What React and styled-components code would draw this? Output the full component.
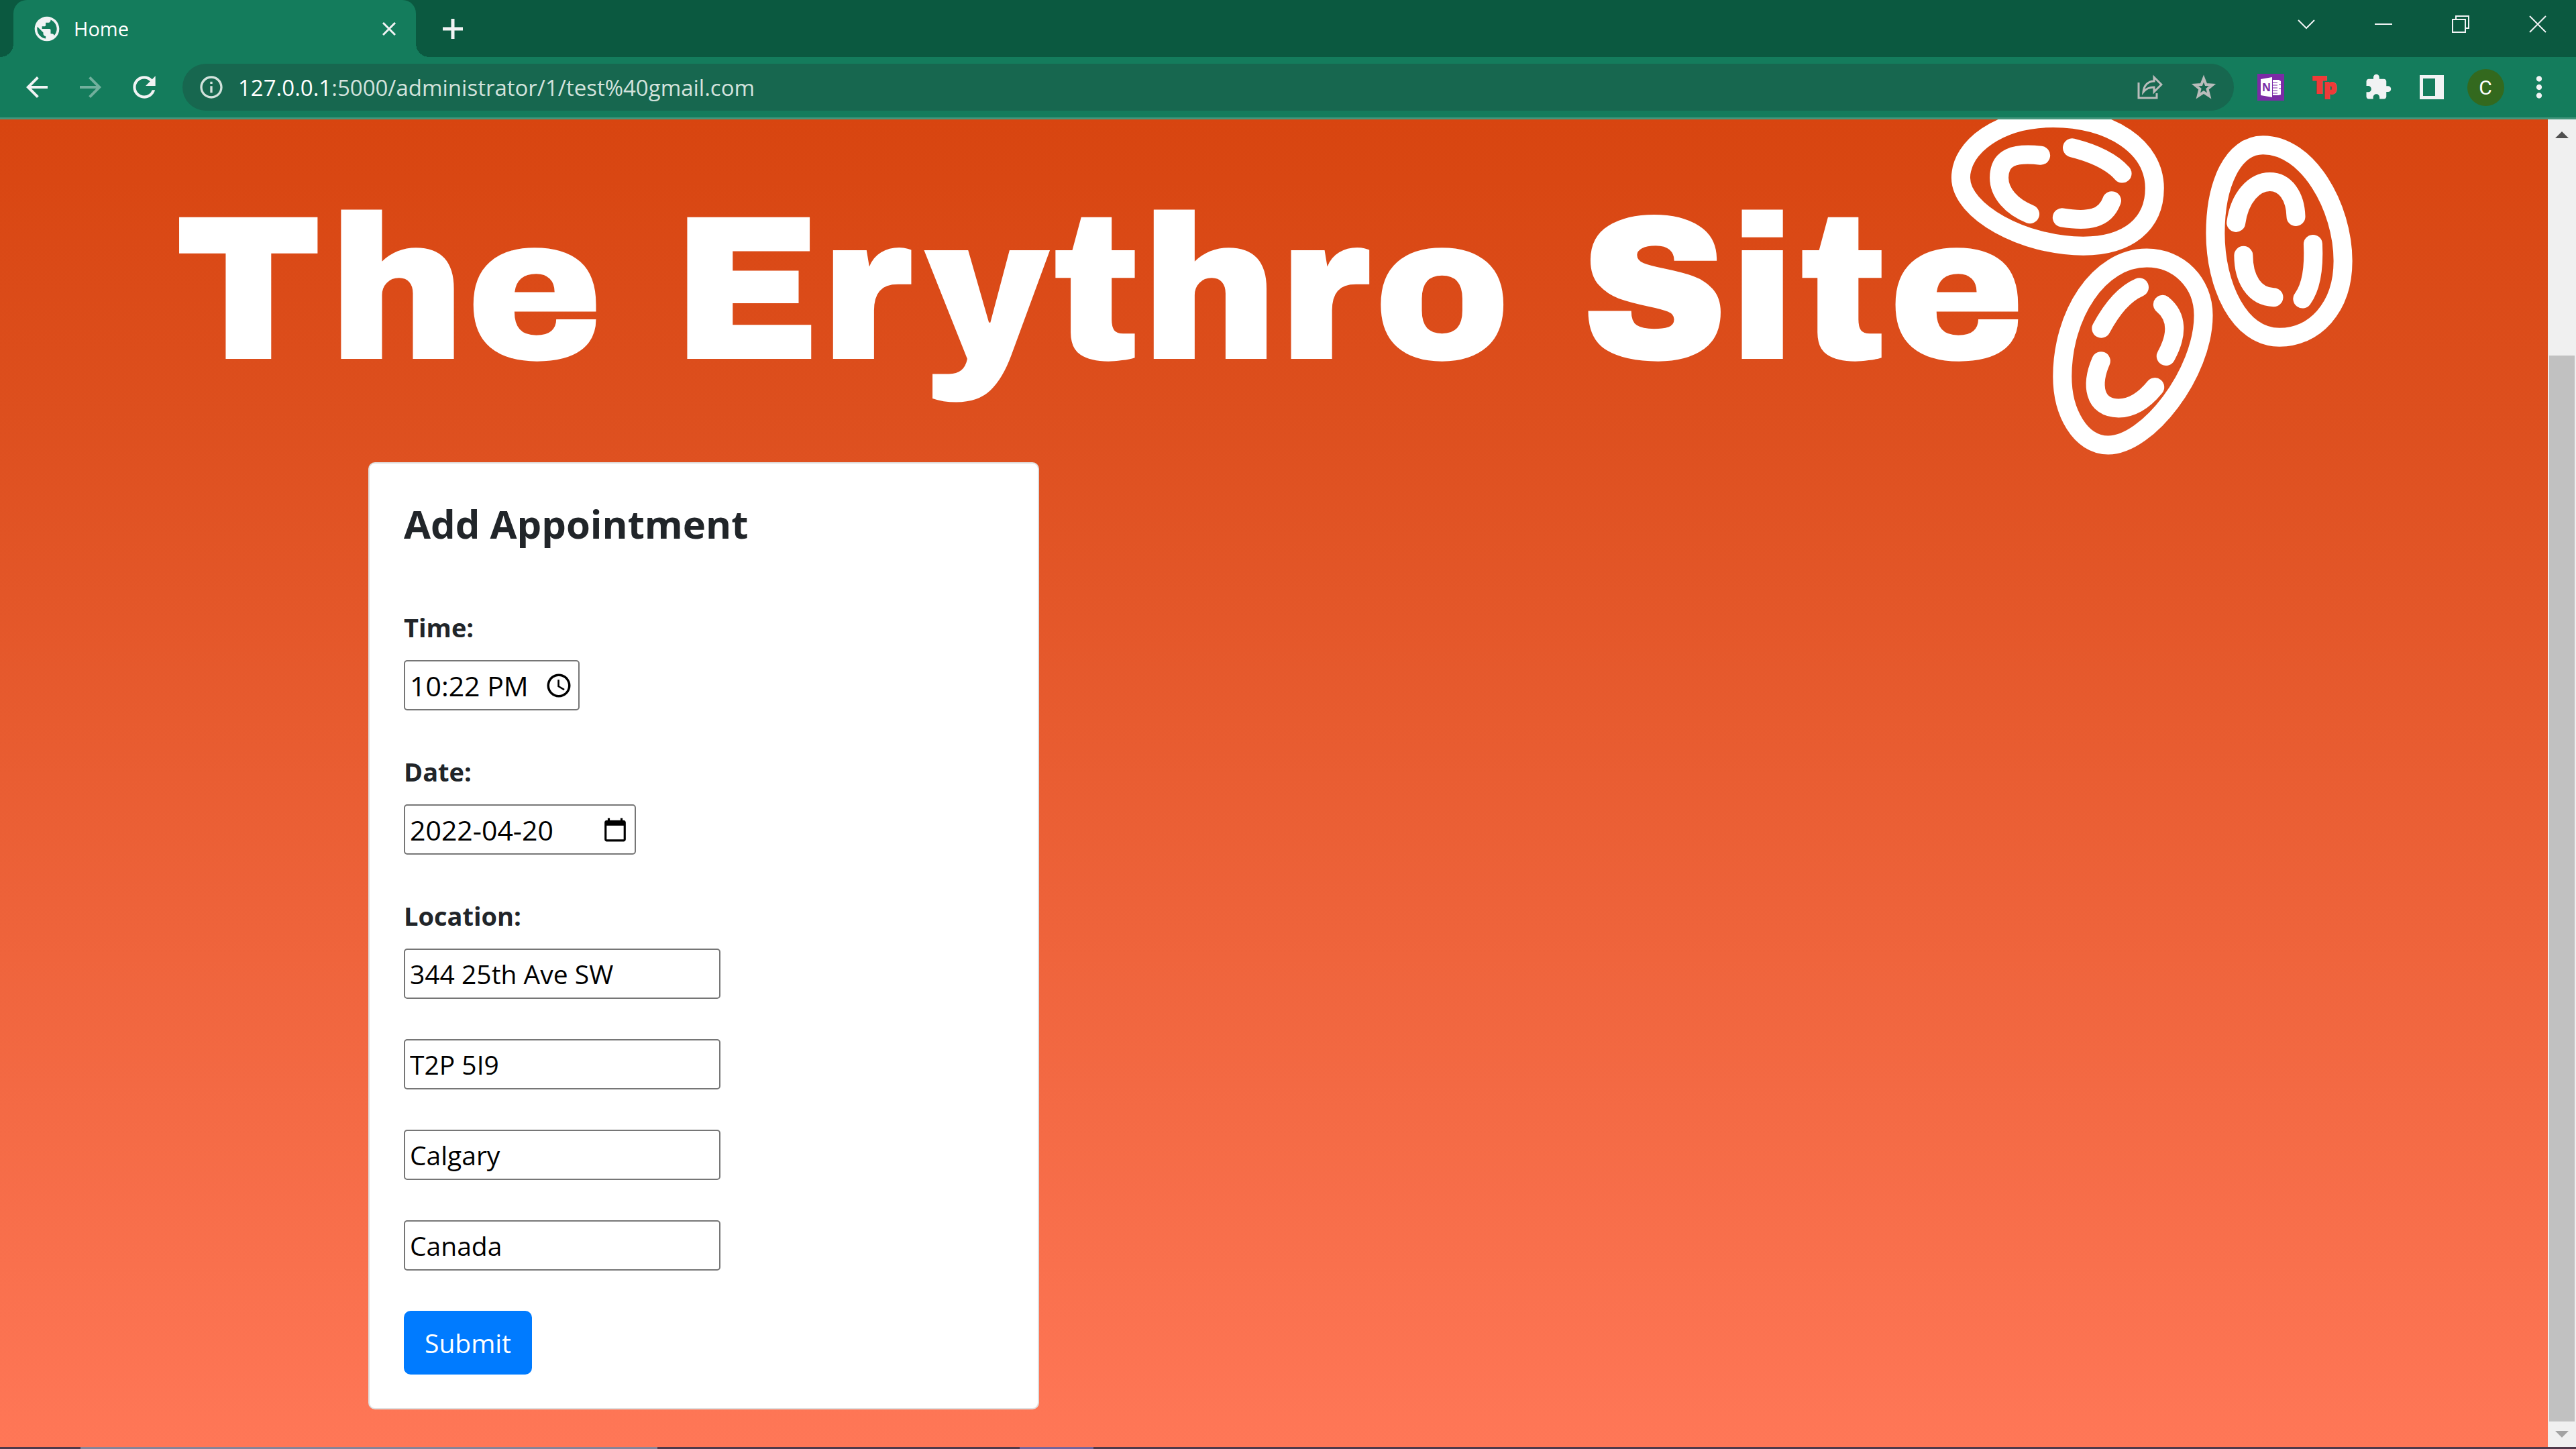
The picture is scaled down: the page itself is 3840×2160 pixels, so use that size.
import React from 'react';
import styled, { createGlobalStyle } from 'styled-components';
import {
  MdPublic, MdArrowBack, MdArrowForward, MdRefresh, MdInfoOutline,
  MdExtension, MdMoreVert, MdAccessTime, MdCalendarToday,
} from 'react-icons/md';

const ui = '"Segoe UI", "Open Sans", "Noto Sans", sans-serif';

const GlobalStyle = createGlobalStyle`
  *, *::before, *::after { box-sizing: border-box; }
  body { margin: 0; font-family: ${ui}; }
  button, input { font: inherit; color: inherit; }
  svg { display: block; }
`;

const Window = styled.div`
  display: flex;
  flex-direction: column;
  min-height: 100vh;
`;

const IconButton = styled.button`
  display: flex;
  flex: none;
  align-items: center;
  justify-content: center;
  width: ${(p) => p.$width || 80}px;
  height: ${(p) => p.$height || 70}px;
  padding: 0;
  border: 0;
  background: none;
  color: ${(p) => p.$color || '#f1f3f4'};
`;

const TabStrip = styled.div`
  display: flex;
  height: 85px;
  padding-left: 20px;
  background: #0b5940;
`;

const Tab = styled.div`
  position: relative;
  display: flex;
  align-items: center;
  width: 600px;
  padding: 0 20px 0 28px;
  border-radius: 20px 20px 0 0;
  background: #147c5c;
  color: #fff;
  font-size: 29px;

  &::before, &::after {
    content: '';
    position: absolute;
    bottom: 0;
    width: 20px;
    height: 20px;
  }
  &::before {
    right: 100%;
    background: radial-gradient(circle at 0 0, transparent 20px, #147c5c 20px);
  }
  &::after {
    left: 100%;
    background: radial-gradient(circle at 100% 0, transparent 20px, #147c5c 20px);
  }
`;

const TabTitle = styled.span`
  flex: 1;
  margin-left: 18px;
`;

const WindowControls = styled.div`
  display: flex;
  margin-left: auto;
`;

const Toolbar = styled.div`
  display: flex;
  align-items: center;
  height: 93px;
  padding: 0 15px;
  border-bottom: 3px solid #43967c;
  background: #147c5c;
`;

const AddressBar = styled.div`
  display: flex;
  flex: 1;
  align-items: center;
  height: 70px;
  margin: 0 15px 0 17px;
  padding: 0 5px 0 23px;
  border-radius: 35px;
  background: #17674f;
  color: #d2e2dc;
  font-size: 33px;
`;

const Address = styled.span`
  flex: 1;
  margin-left: 20px;
  white-space: nowrap;
`;

const Host = styled.span`
  color: #fff;
`;

const Avatar = styled.span`
  width: 55px;
  height: 55px;
  border-radius: 50%;
  background: #33691e;
  color: #fff;
  font: 30px/55px Roboto, sans-serif;
  text-align: center;
`;

const Viewport = styled.div`
  display: flex;
  flex: 1;
`;

const Page = styled.main`
  flex: 1;
  min-width: 0;
  padding-bottom: 56px;
  overflow: hidden;
  background: linear-gradient(#d84510, #dd4f1e 22%, #ff7757);
`;

const SiteHeader = styled.header`
  display: flex;
  height: 511px;
  padding: 0 238px 0 260px;
`;

const SiteTitle = styled.h1`
  flex: 1;
  min-width: 0;
  margin: 0;
  padding-top: 74px;
  color: #fff;
  font: 400 307px/360px "Archivo Black", "DejaVu Sans", sans-serif;
  white-space: nowrap;
`;

const Card = styled.form`
  display: flex;
  flex-direction: column;
  align-items: flex-start;
  gap: 60px;
  width: 1000px;
  margin-left: 549px;
  padding: 52px 51px 50px;
  border: 2px solid #dfdfdf;
  border-radius: 10px;
  background: #fff;
  color: #212529;
  font-size: 39px;
  line-height: 60px;
`;

const CardTitle = styled.h2`
  margin: 0 0 26px;
  font-size: 58px;
  font-weight: 700;
  line-height: 75px;
`;

const Field = styled.div`
  display: flex;
  flex-direction: column;
  gap: 18px;
`;

const Label = styled.label`
  font-size: 38px;
  font-weight: 700;
  line-height: 62px;
`;

const InputBox = styled.div`
  display: flex;
  align-items: center;
  width: ${(p) => p.$width}px;
  height: 75px;
  padding: 0 8px 0 0;
  border: 2px solid #767676;
  border-radius: 5px;
  background: #fff;
  color: #000;
  font-size: ${(p) => (p.$picker ? 41 : 39)}px;
`;

const Input = styled.input`
  flex: 1;
  min-width: 0;
  height: 71px;
  padding: 0 0 0 7px;
  border: 0;
  outline: 0;
  background: none;
`;

const Submit = styled.button`
  height: 95px;
  padding: 0 31px;
  border: 0;
  border-radius: 10px;
  background: #007bff;
  color: #fff;
`;

const Scrollbar = styled.div`
  display: flex;
  flex-direction: column;
  align-items: center;
  width: 42px;
  padding-top: 4px;
  background: #f0f0f0;
`;

const Thumb = styled.div`
  flex: 1;
  width: 38px;
  margin-top: 310px;
  background: #c1c1c1;
`;

const TaskbarEdge = styled.div`
  display: flex;
  height: 3px;
  background: #50394a;
`;

const TaskbarItem = styled.span`
  width: ${(p) => p.$width}px;
  margin-left: ${(p) => p.$before}px;
  background: ${(p) => p.$color};
`;

function Cells() {
  return (
    <svg width="700" height="500" viewBox="0 52 1568 1452" preserveAspectRatio="none" fill="none" aria-hidden="true">
      <g stroke="#fff" strokeWidth="28" strokeLinecap="round">
        {[
          'M141 305C141 170 270 46 450 46C640 46 788 170 788 350C788 505 700 600 550 600C350 600 141 450 141 305Z',
          'M408 208C320 195 269 215 269 305C269 370 310 430 372 462',
          'M513 175C590 200 645 235 680 286',
          'M645 404C622 485 565 495 479 477',
          'M1150 163C1300 163 1417 430 1417 665C1417 870 1320 995 1205 995C1070 995 991 770 991 545C991 330 1050 163 1150 163Z',
          'M1060 499C1072 390 1120 322 1173 322C1225 322 1258 385 1260 473',
          'M1317 592C1321 700 1310 780 1282 829',
          'M1085 641C1085 740 1120 820 1186 822',
          'M762 652C870 652 951 760 951 900C951 1150 765 1462 633 1462C540 1462 480 1320 480 1165C480 900 600 652 762 652Z',
          'M737 779C690 805 650 860 610 957',
          'M815 853C865 905 865 985 826 1077',
          'M609 1098C575 1200 585 1302 668 1302C715 1302 755 1265 789 1211',
        ].map((d) => <path key={d} d={d} vectorEffect="non-scaling-stroke" />)}
      </g>
    </svg>
  );
}

function LineIcon({ size, d, width = 2 }) {
  return (
    <svg width={size} height={size} viewBox={`0 0 ${size} ${size}`} fill="none" stroke="currentColor" strokeWidth={width} aria-hidden="true">
      <path d={d} />
    </svg>
  );
}

function StarIcon() {
  return (
    <svg width="38" height="38" viewBox="0 0 38 38" fill="none" stroke="currentColor" strokeWidth="4" aria-hidden="true">
      <path d="M19 6L22.500 15L32 15.600L24.600 21.700L27.200 32L19 26.500L10.800 32L13.400 21.700L6 15.600L15.500 15Z" />
    </svg>
  );
}

function OneNoteIcon() {
  return (
    <svg width="40" height="40" viewBox="0 0 40 40" aria-hidden="true">
      <path fill="#7b2ba6" d="M0 0h40v40H0z" />
      <path fill="#fff" d="M5 8l17-3v30L5 32zM23 9h9l3 2v20l-3 1h-9z" />
      <path stroke="#7b2ba6" strokeWidth="1" d="M23 13h7M23 17h7M23 21h7M23 25h7M23 29h7M32 16h3M32 22h3" />
      <text x="13.500" y="26" fill="#7b2ba6" textAnchor="middle" fontFamily="Open Sans, sans-serif" fontWeight="700" fontSize="16">N</text>
    </svg>
  );
}

function TpIcon() {
  return (
    <svg width="60" height="60" viewBox="0 0 60 60" fill="#f03a38" stroke="#f03a38" strokeWidth="2" fontFamily="Open Sans, sans-serif" fontWeight="800" aria-hidden="true">
      <text x="12" y="39" fontSize="36">T<tspan dx="-4" dy="1" fontSize="30">p</tspan></text>
    </svg>
  );
}

function ArrowIcon({ d, color }) {
  return (
    <svg width="20" height="10" viewBox="0 0 20 10" fill={color} aria-hidden="true"><path d={d} /></svg>
  );
}

const addressLines = [
  { name: 'postal', label: 'Postal code', value: 'T2P 5I9' },
  { name: 'city', label: 'City', value: 'Calgary' },
  { name: 'country', label: 'Country', value: 'Canada' },
];

function TextField({ id, label, value, width, icon, ariaLabel }) {
  return (
    <Field>
      {label && <Label htmlFor={id}>{label}</Label>}
      <InputBox $width={width} $picker={Boolean(icon)}>
        <Input id={id} name={id} type="text" defaultValue={value} aria-label={ariaLabel} />
        {icon && <IconButton type="button" $width={42} $color="#000" aria-label={`Choose ${id}`}>{icon}</IconButton>}
      </InputBox>
    </Field>
  );
}

export default function App() {
  return (
    <Window>
      <GlobalStyle />
      <TabStrip>
        <Tab>
          <MdPublic size={44} color="#f1f3f4" />
          <TabTitle>Home</TabTitle>
          <IconButton $width={40} aria-label="Close tab"><LineIcon size={20} width={3} d="M1 1L19 19M19 1L1 19" /></IconButton>
        </Tab>
        <IconButton $width={110} $height={85} aria-label="New tab"><LineIcon size={30} width={5} d="M15 0V30M0 15H30" /></IconButton>
        <WindowControls>
          <IconButton $width={115} $height={72} aria-label="Search tabs"><LineIcon size={26} d="M1 7L13 19L25 7" /></IconButton>
          <IconButton $width={115} $height={72} aria-label="Minimize"><LineIcon size={26} d="M0 13H26" /></IconButton>
          <IconButton $width={115} $height={72} aria-label="Restore"><LineIcon size={26} d="M1 6H20V25H1ZM6 6V1H25V19H20" /></IconButton>
          <IconButton $width={115} $height={72} aria-label="Close"><LineIcon size={26} d="M1 1L25 25M25 1L1 25" /></IconButton>
        </WindowControls>
      </TabStrip>

      <Toolbar>
        <IconButton aria-label="Back"><MdArrowBack size={48} /></IconButton>
        <IconButton $color="#72b09d" aria-label="Forward"><MdArrowForward size={48} /></IconButton>
        <IconButton aria-label="Reload"><MdRefresh size={50} /></IconButton>
        <AddressBar>
          <MdInfoOutline size={40} />
          <Address><Host>127.0.0.1</Host>:5000/administrator/1/test%40gmail.com</Address>
          <IconButton $color="#b9bcbb" aria-label="Share">
            <LineIcon size={38} width={3} d="M2 12V35H29V28M9 26C10 16 16 10 25 10V4L36 15L25 26V19C18 19 13 21 9 26Z" />
          </IconButton>
          <IconButton $color="#b9bcbb" aria-label="Bookmark"><StarIcon /></IconButton>
        </AddressBar>
        <IconButton aria-label="OneNote"><OneNoteIcon /></IconButton>
        <IconButton aria-label="Teleparty"><TpIcon /></IconButton>
        <IconButton aria-label="Extensions"><MdExtension size={42} /></IconButton>
        <IconButton aria-label="Side panel">
          <svg width="36" height="36" viewBox="0 0 36 36" fill="currentColor" aria-hidden="true"><path fillRule="evenodd" d="M0 0H36V36H0ZM5 5V31H23V5Z" /></svg>
        </IconButton>
        <IconButton aria-label="Profile"><Avatar>C</Avatar></IconButton>
        <IconButton aria-label="Menu"><MdMoreVert size={50} /></IconButton>
      </Toolbar>

      <Viewport>
        <Page>
          <SiteHeader>
            <SiteTitle>The Erythro Site</SiteTitle>
            <Cells />
          </SiteHeader>
          <Card onSubmit={(e) => e.preventDefault()}>
            <CardTitle>Add Appointment</CardTitle>
            <TextField id="time" label="Time:" value="10:22 PM" width={262} icon={<MdAccessTime size={42} />} />
            <TextField id="date" label="Date:" value="2022-04-20" width={346} icon={<MdCalendarToday size={38} />} />
            <TextField id="location" label="Location:" value="344 25th Ave SW" width={472} />
            {addressLines.map((line) => (
              <TextField key={line.name} id={line.name} ariaLabel={line.label} value={line.value} width={472} />
            ))}
            <Submit type="submit">Submit</Submit>
          </Card>
        </Page>
        <Scrollbar>
          <IconButton $width={42} $height={38} aria-label="Scroll up"><ArrowIcon color="#505050" d="M0 10L10 0L20 10Z" /></IconButton>
          <Thumb />
          <IconButton $width={42} $height={38} aria-label="Scroll down"><ArrowIcon color="#a3a3a3" d="M0 0L10 10L20 0Z" /></IconButton>
        </Scrollbar>
      </Viewport>
      <TaskbarEdge>
        <TaskbarItem $before={120} $width={860} $color="#868398" />
        <TaskbarItem $before={540} $width={110} $color="#76649a" />
      </TaskbarEdge>
    </Window>
  );
}
